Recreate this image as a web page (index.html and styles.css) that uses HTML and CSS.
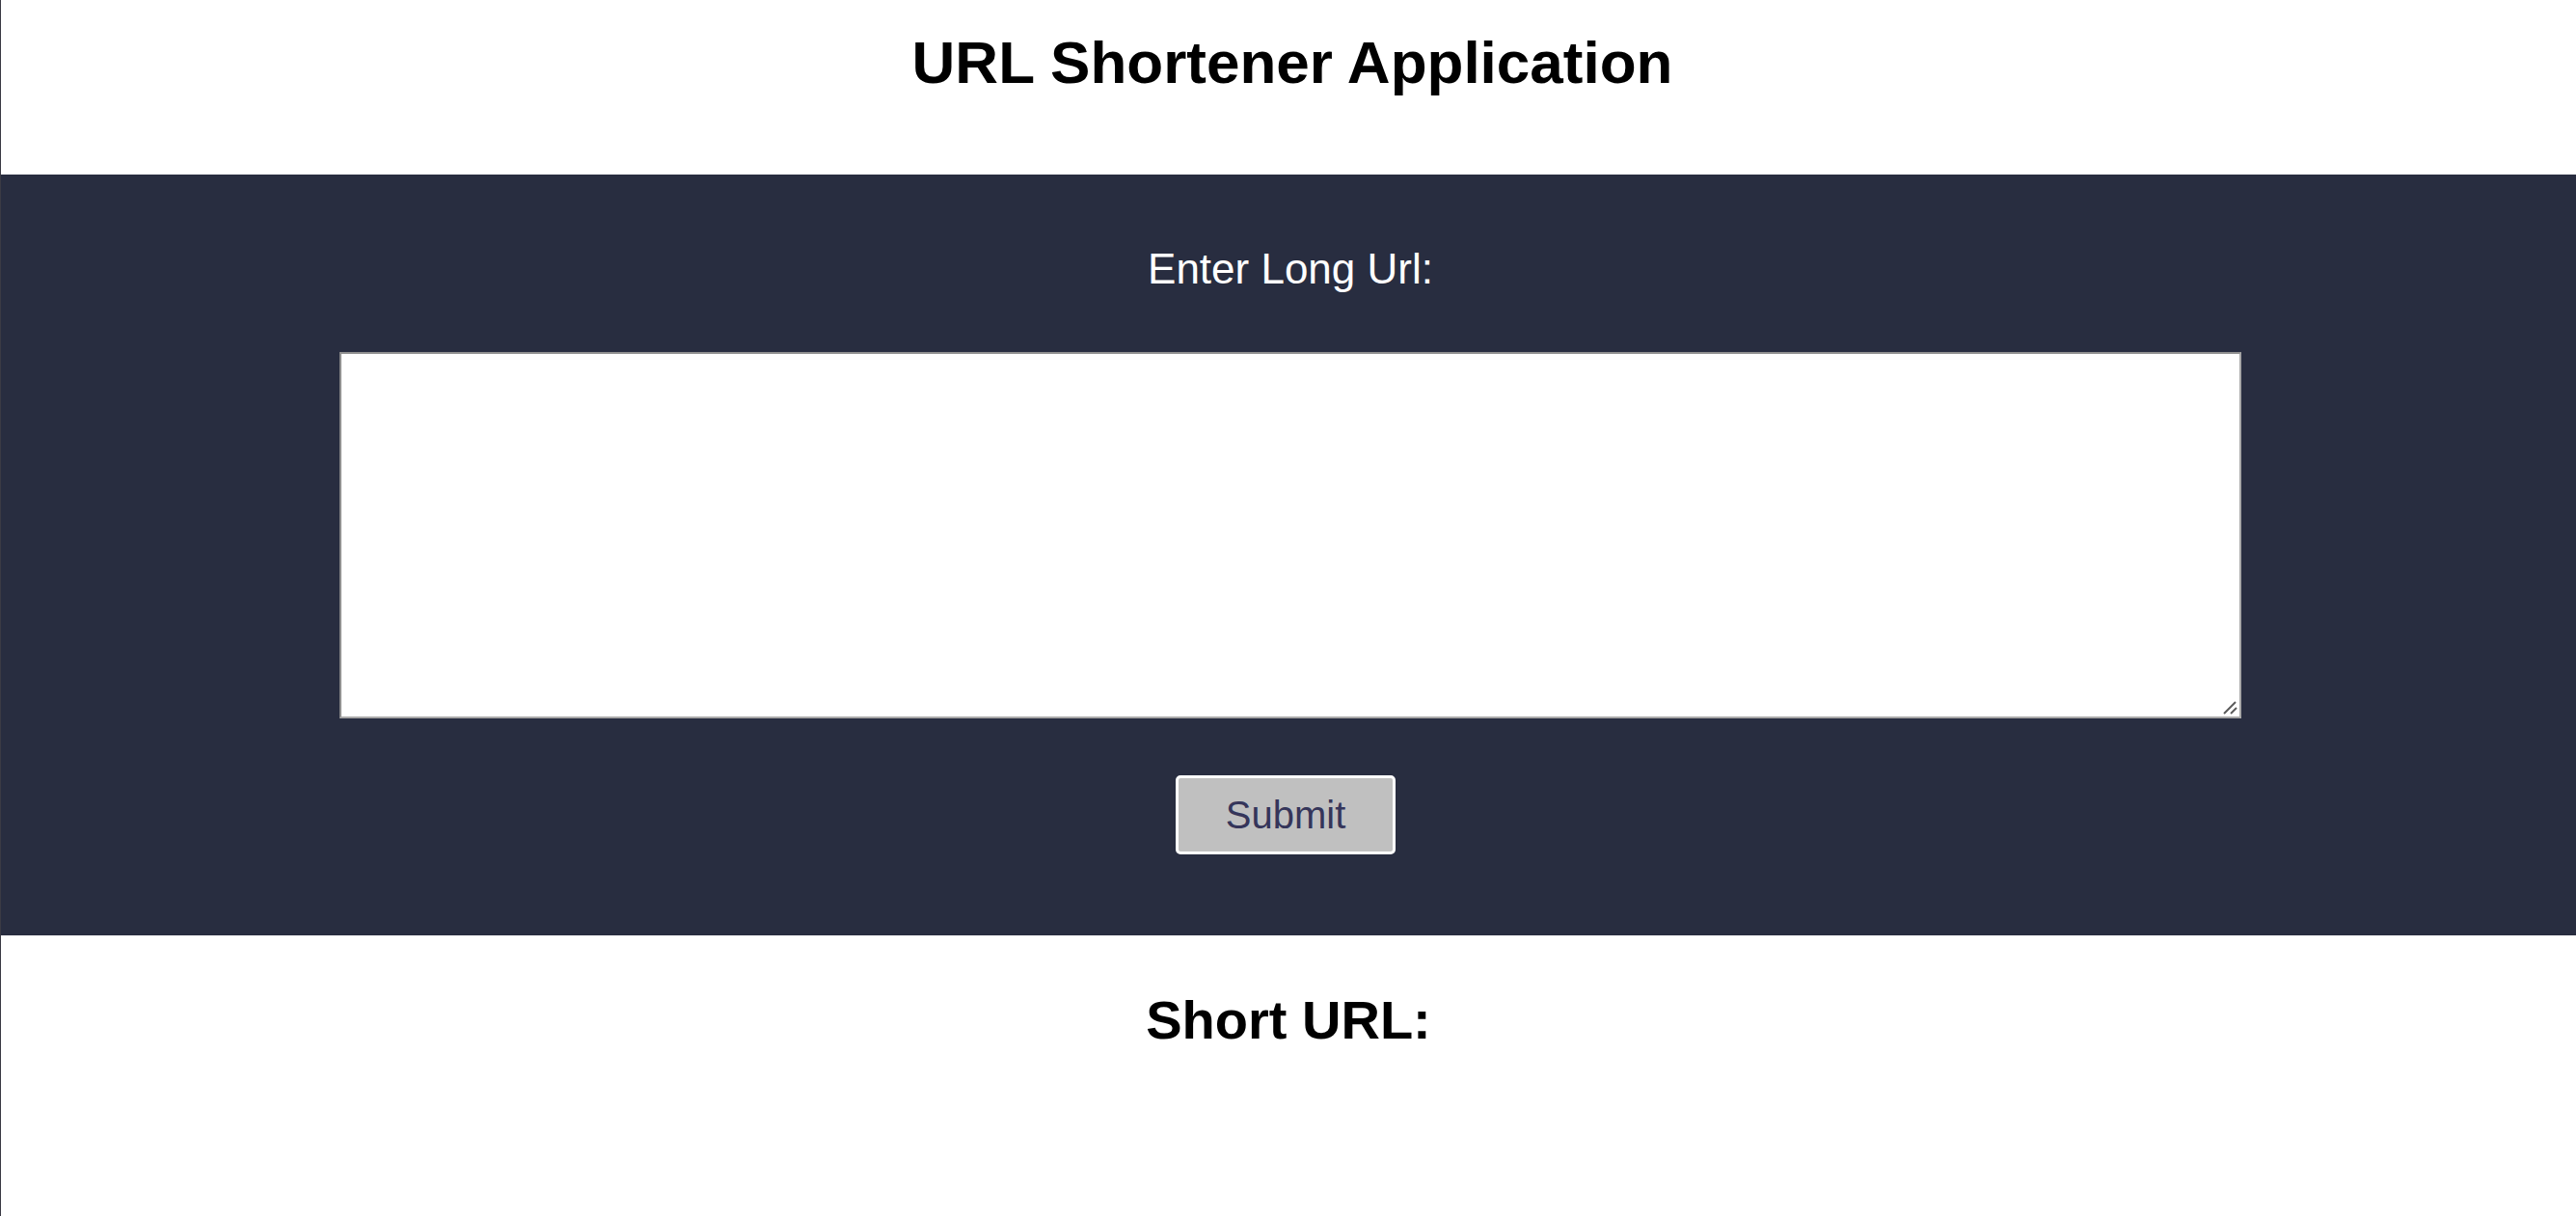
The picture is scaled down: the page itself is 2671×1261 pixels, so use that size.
FILE: index.html
```html
<!DOCTYPE html>
<html lang="en">
<head>
<meta charset="utf-8">
<title>URL Shortener Application</title>
<link rel="stylesheet" href="styles.css">
</head>
<body>
  <header class="page-header">
    <h1 class="title">URL Shortener Application</h1>
  </header>
  <form class="shortener">
    <label class="field-label" for="longUrl">Enter Long Url:</label>
    <div class="input-wrap">
      <textarea id="longUrl" class="url-input"></textarea>
      <svg class="grip" width="16" height="16" viewBox="0 0 16 16" aria-hidden="true">
        <line x1="1" y1="14" x2="13" y2="2" />
        <line x1="8" y1="14" x2="14" y2="8" />
      </svg>
    </div>
    <button type="button" class="submit-btn">Submit</button>
  </form>
  <section class="result">
    <h2 class="result-title">Short URL:</h2>
  </section>
</body>
</html>
```
FILE: styles.css
```css
html, body {
  margin: 0;
  padding: 0;
  background: #ffffff;
}

body {
  min-height: 1261px;
  border-left: 1px solid #3a3a44;
  font-family: "Liberation Sans", Arial, Helvetica, sans-serif;
  color: #000;
}

.page-header {
  padding: 29px 0 80px 8px;
  text-align: center;
}

.title {
  margin: 0;
  font-size: 62px;
  line-height: 72px;
  font-weight: 700;
}

.shortener {
  background: #282d40;
  display: flex;
  flex-direction: column;
  align-items: center;
  padding: 72px 0 84px 4px;
  margin: 0;
}

.field-label {
  color: #ffffff;
  font-size: 44px;
  line-height: 52px;
}

.input-wrap {
  position: relative;
  margin-top: 60px;
  width: 1972px;
  height: 380px;
}

.url-input {
  display: block;
  box-sizing: border-box;
  width: 100%;
  height: 100%;
  margin: 0;
  border: 2px solid #8f8f8f;
  border-right-color: #a8a8a8;
  border-bottom-color: #a8a8a8;
  background: #ffffff;
  padding: 4px;
  resize: none;
  font-family: "Liberation Sans", Arial, sans-serif;
  font-size: 26px;
}

.grip {
  position: absolute;
  right: 3px;
  bottom: 3px;
  pointer-events: none;
}

.grip line {
  stroke: #5a5a5a;
  stroke-width: 2;
}

.submit-btn {
  margin-top: 59px;
  margin-right: 10px;
  box-sizing: border-box;
  width: 228px;
  height: 82px;
  background: #c0c0c0;
  border: 3px solid #ffffff;
  border-radius: 5px;
  color: #35355a;
  font-family: "Liberation Sans", Arial, sans-serif;
  font-size: 40px;
  padding: 0;
}

.result {
  text-align: center;
  padding-top: 56px;
}

.result-title {
  margin: 0;
  font-size: 56px;
  line-height: 64px;
  font-weight: 700;
}
```
